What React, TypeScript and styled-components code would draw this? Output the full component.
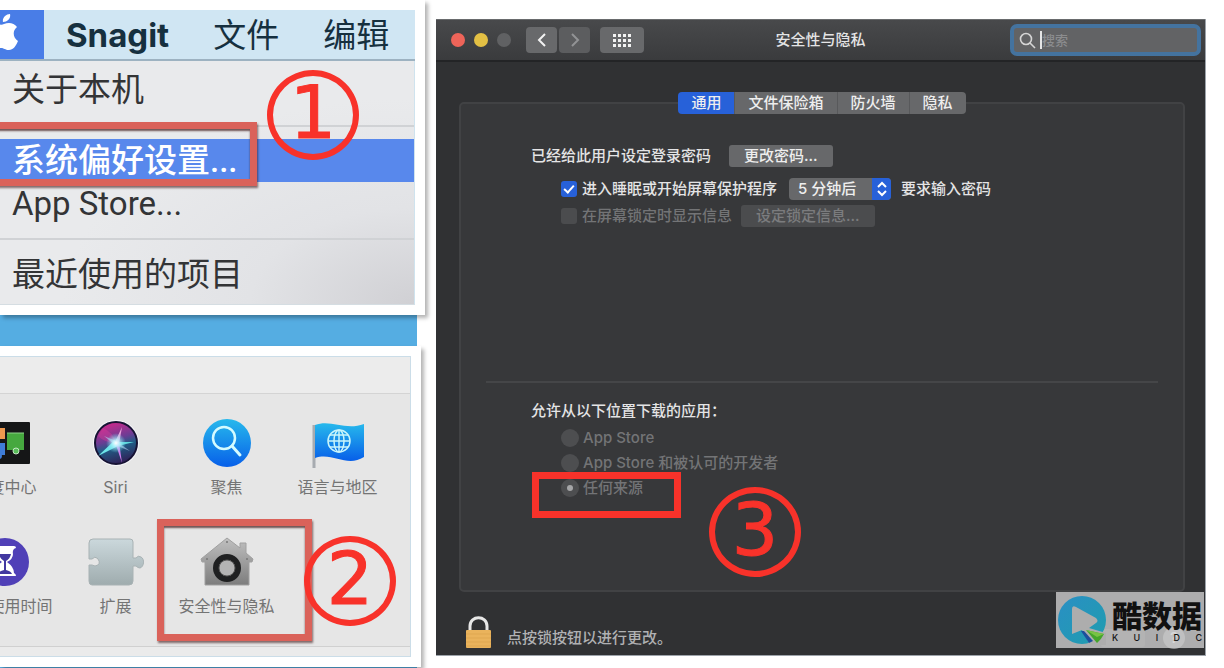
import React from "react";
import styled, { createGlobalStyle, css } from "styled-components";

const GlobalStyle = createGlobalStyle`
  *, *::before, *::after { box-sizing: border-box; }
  body {
    margin: 0;
    background: #fff;
    font-family: Inter, "Noto Sans CJK SC", sans-serif;
  }
  button, input, select { font: inherit; margin: 0; }
`;

const Page = styled.main`
  display: grid;
  grid-template-columns: 436px minmax(0, 1fr);
  align-items: start;
`;

const Steps = styled.div`
  display: flex;
  flex-direction: column;
  align-items: flex-start;
  overflow: hidden;
`;

const Card = styled.section<{ $width: number; $edge: number }>`
  position: relative;
  z-index: 1;
  width: ${(p) => p.$width}px;
  padding: 10px ${(p) => p.$edge}px 10px 0;
  background: #fff;
  box-shadow: 3px 3px 4px rgba(0, 0, 0, 0.3);
`;

const Strip = styled.div<{ $height: number }>`
  width: 417px;
  height: ${(p) => p.$height}px;
  background: #55ade2;
`;

/* Step 1: the Apple menu */

const MenuBar = styled.div`
  display: flex;
  align-items: center;
  gap: 44px;
  height: 51px;
  background: #d0e6f3;
  border-bottom: 2px solid #9db2c1;
  color: #16303f;
  font-size: 33px;
`;

const AppleBox = styled.div`
  width: 44px;
  height: 49px;
  margin-right: -22px;
  background: #497de7;
`;

const AppName = styled.strong`
  font-weight: 700;
`;

const MenuTitle = styled.span`
  padding-bottom: 4px;
`;

const MenuList = styled.ul`
  margin: 0;
  padding: 0 0 8px;
  list-style: none;
  color: #333436;
  font-family: Roboto, "Noto Sans CJK SC", sans-serif;
  font-size: 33px;
  background: radial-gradient(ellipse at 100% 100%, #d0d0d4 0, #e2e3e6 28%, #e9eaec 60%);
  border-right: 1px solid #cfe3ee;
  border-bottom: 1px solid #d5dde2;
`;

const MenuItem = styled.li<{ $active?: boolean; $tall?: boolean }>`
  height: ${(p) => (p.$tall ? 58 : 43)}px;
  padding-left: 12px;
  line-height: ${(p) => (p.$tall ? 58 : 43)}px;
  white-space: nowrap;
  ${(p) =>
    p.$active &&
    css`
      background: #5888ec;
      color: #fff;
      font-weight: 500;
    `}
`;

const MenuRule = styled.li<{ $above: number; $below: number }>`
  height: 2px;
  margin: ${(p) => p.$above}px 0 ${(p) => p.$below}px;
  background: #d0d2d5;
`;

/* Step 2: the preference grid */

const PrefPane = styled.div`
  border: 1px solid #cbdde8;
  border-left: 0;
  background: #e6e6e6;
`;

const PrefHeader = styled.div`
  height: 37px;
  background: #ececec;
  border-bottom: 1px solid #d4d4d4;
`;

const PrefGrid = styled.div`
  display: grid;
  grid-template-columns: repeat(4, 111px);
  justify-content: end;
  height: 252px;
  padding: 24px 17px 0 0;
  overflow: hidden;
`;

const PrefItem = styled.a`
  display: flex;
  flex-direction: column;
  align-items: center;
  gap: 7px;
  height: 119px;
  color: #747474;
  font-size: 16px;
  line-height: 24px;
  text-decoration: none;
  white-space: nowrap;
`;

const PrefFooter = styled.div`
  height: 10px;
  border-top: 1px solid #d0d0d0;
  background: #ebebeb;
`;

/* Annotations lying over the panels */

const Mark = styled.div<{ $x: number; $y: number }>`
  position: absolute;
  left: ${(p) => p.$x}px;
  top: ${(p) => p.$y}px;
`;

const RedBox = styled(Mark)<{ $w: number; $h: number; $soft?: boolean }>`
  width: ${(p) => p.$w}px;
  height: ${(p) => p.$h}px;
  border: 7px solid ${(p) => (p.$soft ? "#da625a" : "#f8322a")};
  pointer-events: none;
  ${(p) =>
    p.$soft &&
    css`
      box-shadow: 1px 2px 2px rgba(60, 20, 20, 0.6), inset 0 2px 2px rgba(60, 20, 20, 0.7);
    `}
`;

const StepNumber = styled(Mark)`
  display: flex;
  align-items: center;
  justify-content: center;
  width: 92px;
  height: 90px;
  padding-bottom: 4px;
  border: 6px solid #f8322a;
  border-radius: 50%;
  color: #f8322a;
  font-family: "DejaVu Sans", sans-serif;
  font-size: 73px;
  line-height: 74px;
  -webkit-text-stroke: 1px #f8322a;
`;

/* Step 3: the Security & Privacy window */

const Window = styled.section`
  position: relative;
  margin: 19px 18px 0 0;
  border-right: 1px solid #9da3aa;
  border-bottom: 1px solid #9da3aa;
  background: #303133;
  color: #e4e4e5;
  font-size: 15px;
  font-weight: 500;
  line-height: 22px;
`;

const TitleBar = styled.header`
  display: grid;
  grid-template-columns: 1fr auto 1fr;
  align-items: center;
  height: 43px;
  padding: 0 4px;
  background: linear-gradient(#48494b, #3a3b3d);
  border-top: 1px solid #696b6d;
  border-bottom: 2px solid #232426;
`;

const Controls = styled.div`
  display: flex;
  align-items: center;
  padding-left: 11px;
`;

const Light = styled.button<{ $color: string }>`
  width: 14px;
  height: 14px;
  margin-right: 9px;
  padding: 0;
  border: 0;
  border-radius: 50%;
  background: ${(p) => p.$color};
`;

const NavGroup = styled.div`
  display: flex;
  gap: 2px;
  margin: 0 10px 0 6px;
`;

const ToolButton = styled.button<{ $wide?: boolean }>`
  display: flex;
  align-items: center;
  justify-content: center;
  width: ${(p) => (p.$wide ? 44 : 31)}px;
  height: 26px;
  padding: 0;
  border: 0;
  border-radius: 4px;
  background: #68696b;
  color: #f2f2f2;
  &:disabled { background: #5c5d5f; color: #929395; }
`;

const Title = styled.h1`
  margin: 0;
  font-size: 15px;
  font-weight: 500;
  line-height: 22px;
`;

const SearchBox = styled.label`
  display: flex;
  align-items: center;
  justify-self: end;
  width: 191px;
  height: 32px;
  padding: 0 5px;
  border: 4px solid #44739f;
  border-radius: 7px;
  background: #626365;
  color: #d5d5d5;
`;

const Caret = styled.span`
  width: 2px;
  height: 18px;
  margin-left: 4px;
  background: #e5e5e5;
`;

const SearchInput = styled.input`
  flex: 1;
  min-width: 0;
  padding: 0;
  border: 0;
  outline: 0;
  background: transparent;
  color: #eee;
  font-size: 13px;
  &::placeholder { color: #8b8c8e; opacity: 1; }
`;

const WindowBody = styled.div`
  padding: 30px 20px 0 23px;
`;

const Tabs = styled.div`
  position: relative;
  display: flex;
  width: fit-content;
  margin: 0 auto -12px;
  border-radius: 4px;
  overflow: hidden;
`;

const Tab = styled.button<{ $selected?: boolean }>`
  height: 22px;
  padding: 0 13px;
  border: 0;
  border-right: 1px solid #58595b;
  background: ${(p) => (p.$selected ? "#2761d9" : "#67686a")};
  color: #eee;
  line-height: 22px;
  &:last-child { border-right: 0; }
`;

const Panel = styled.div`
  height: 490px;
  padding: 41px 25px 0;
  border: 2px solid #414244;
  border-radius: 5px;
  background: #37383a;
`;

const Group = styled.div<{ $height: number; $top?: number }>`
  height: ${(p) => p.$height}px;
  padding: ${(p) => p.$top ?? 0}px 0 0 45px;
`;

const Row = styled.div<{ $height: number; $indent?: boolean; $dim?: boolean }>`
  display: flex;
  align-items: center;
  height: ${(p) => p.$height}px;
  padding-left: ${(p) => (p.$indent ? 30 : 0)}px;
  color: ${(p) => (p.$dim ? "#737476" : "inherit")};
  white-space: nowrap;
`;

const Push = styled.button<{ $gap: number }>`
  height: 22px;
  margin-left: ${(p) => p.$gap}px;
  padding: 0 15px;
  border: 0;
  border-radius: 3px;
  background: #67686a;
  color: #eee;
  line-height: 22px;
  &:disabled { background: #4b4c4e; color: #7b7c7e; }
`;

const Choice = styled.label<{ $gap: number }>`
  display: flex;
  align-items: center;
  gap: ${(p) => p.$gap}px;
`;

const Check = styled.input`
  appearance: none;
  display: grid;
  place-items: center;
  width: 16px;
  height: 16px;
  border-radius: 3px;
  background: #4b4c4e;
  &:checked { background: #2761d9; }
  &:checked::after {
    content: "";
    width: 6px;
    height: 10px;
    margin-bottom: 3px;
    border: solid #fff;
    border-width: 0 2px 2px 0;
    transform: rotate(42deg);
  }
`;

const Radio = styled.input`
  appearance: none;
  display: grid;
  place-items: center;
  width: 18px;
  height: 18px;
  border-radius: 50%;
  background: #4d4e50;
  &:checked::after {
    content: "";
    width: 6px;
    height: 6px;
    border-radius: 50%;
    background: #a5a6a8;
  }
`;

const SelectBox = styled.span`
  display: grid;
  grid-template-columns: 1fr 19px;
  width: 102px;
  height: 22px;
  margin: 0 10px 0 12px;
  border-radius: 4px;
  overflow: hidden;
  background: #67686a;
`;

const Select = styled.select`
  grid-area: 1 / 1 / 2 / 3;
  appearance: none;
  padding: 0 0 0 9px;
  border: 0;
  background: transparent;
  color: #eee;
`;

const SelectArrows = styled.span`
  grid-area: 1 / 2 / 2 / 3;
  display: grid;
  place-items: center;
  background: #2761d9;
  pointer-events: none;
`;

const Rule = styled.hr`
  height: 2px;
  margin: 0;
  border: 0;
  background: #454648;
`;

const Footer = styled.footer`
  display: flex;
  align-items: flex-end;
  gap: 16px;
  height: 63px;
  padding: 0 0 6px 7px;
  color: #b0b1b3;
`;

const FooterActions = styled.div`
  display: flex;
  align-items: center;
  gap: 18px;
  margin-left: auto;
`;

const AdvancedButton = styled.button`
  width: 44px;
  height: 18px;
  padding: 0;
  border: 0;
  border-radius: 3px;
  background: #4b4c4e;
`;

const HelpButton = styled.button`
  width: 22px;
  height: 22px;
  padding: 0;
  border: 0;
  border-radius: 50%;
  background: #8c8d8f;
  color: #fff;
  line-height: 22px;
`;

const Watermark = styled.aside`
  position: absolute;
  right: 1px;
  bottom: 7px;
  display: flex;
  align-items: center;
  gap: 6px;
  width: 148px;
  height: 56px;
  padding: 0 2px;
  background: rgba(205, 205, 205, 0.8);
  color: #111;
`;

const Brand = styled.div`
  display: flex;
  flex-direction: column;
  flex: 1;
`;

const BrandName = styled.b`
  font-family: "Noto Sans CJK SC", sans-serif;
  font-size: 30px;
  font-weight: 900;
  line-height: 36px;
  white-space: nowrap;
`;

const BrandLatin = styled.span`
  display: flex;
  justify-content: space-between;
  font-size: 9px;
  font-weight: 500;
  line-height: 12px;
`;

const AppleLogo = () => (
  <svg width="44" height="49" viewBox="0 0 44 49" aria-hidden="true">
    <path
      fill="#fff"
      d="M3 12C2 8 6 4 10 4C11 8 8 12 3 12ZM-16 25C-16 16-8 12-2 14C1 15 2 15 4 14C9 12 14 13 17 17C12 21 13 28 18 31C16 36 13 40 9 40C5 40 4 38 1 38C-3 38-5 40-8 38C-13 34-16 30-16 25Z"
    />
  </svg>
);

const MissionIcon = () => (
  <svg width="54" height="50" viewBox="0 0 54 50" aria-hidden="true">
    <rect x="0" y="4" width="52" height="42" rx="1" fill="#151617" />
    <rect x="4" y="10" width="23" height="11" fill="#ee9a50" />
    <rect x="13" y="25" width="14" height="12" fill="#3f7dd8" />
    <circle cx="21" cy="38" r="3" fill="#3f7dd8" />
    <path d="M29 15H46V32H29Z" fill="#46a83f" />
    <path d="M29 15H46" stroke="#8ed38b" />
    <circle cx="38" cy="33" r="3" fill="#58bd59" stroke="#c4e5c4" />
  </svg>
);

const SiriIcon = () => (
  <svg width="50" height="50" viewBox="0 0 50 50" aria-hidden="true">
    <defs>
      <linearGradient id="siri" x1=".3" y1="0" x2=".6" y2="1">
        <stop offset="0" stopColor="#d3268b" />
        <stop offset=".42" stopColor="#6a3d94" />
        <stop offset=".6" stopColor="#205d86" />
        <stop offset="1" stopColor="#311d54" />
      </linearGradient>
      <radialGradient id="glow">
        <stop offset="0" stopColor="#fff" />
        <stop offset=".35" stopColor="#bdf6ff" stopOpacity=".8" />
        <stop offset="1" stopColor="#6edcf0" stopOpacity="0" />
      </radialGradient>
    </defs>
    <circle cx="25" cy="25" r="23" fill="#f7f7fa" />
    <circle cx="25" cy="25" r="21" fill="url(#siri)" stroke="#171334" strokeWidth="2" />
    <path d="M12 10Q22 14 25 25Q14 25 7 18Z" fill="#dd3b9c" opacity=".4" />
    <path d="M24 22L7 38L27 28Z" fill="#6de5e9" />
    <path d="M24 24L43 24L27 28Z" fill="#5ed8dc" />
    <path d="M24 24L31 45L28 24Z" fill="#cf7ced" />
    <path d="M24 24L31 9L28 26Z" fill="#e8a3dc" />
    <path d="M13 18L25 23L39 33L24 27Z" fill="#b6d6f4" opacity=".6" />
    <circle cx="25" cy="25" r="10" fill="url(#glow)" />
  </svg>
);

const SpotlightIcon = () => (
  <svg width="50" height="50" viewBox="0 0 50 50" aria-hidden="true">
    <defs>
      <linearGradient id="blue" x1="0" y1="0" x2="0" y2="1">
        <stop offset="0" stopColor="#27b9ec" />
        <stop offset="1" stopColor="#075fe9" />
      </linearGradient>
    </defs>
    <circle cx="25" cy="25" r="24" fill="url(#blue)" />
    <circle cx="22" cy="20" r="11" fill="none" stroke="#d4fbff" strokeWidth="2.5" />
    <path d="M30 28L38 37" stroke="#d4fbff" strokeWidth="3" strokeLinecap="round" />
  </svg>
);

const FlagIcon = () => (
  <svg width="54" height="50" viewBox="0 0 54 50" aria-hidden="true">
    <path d="M3 7V50" stroke="#a7abb0" strokeWidth="3" />
    <path d="M4 7C20 1 34 13 53 6V39C36 50 22 34 4 40Z" fill="url(#blue)" />
    <g fill="none" stroke="#c9f5fb" strokeWidth="1.5">
      <circle cx="28" cy="23" r="11" />
      <ellipse cx="28" cy="23" rx="5" ry="11" />
      <path d="M28 12V34M17 23H39M19 17H37M19 29H37" />
    </g>
  </svg>
);

const ScreenTimeIcon = () => (
  <svg width="50" height="50" viewBox="0 0 50 50" aria-hidden="true">
    <circle cx="25" cy="25" r="24" fill="#5040b7" />
    <path
      d="M15 9H34Q36 9 36 11Q32 12 33 17Q33 22 27 25Q34 30 34 36Q36 37 36 39H14Q14 37 16 36Q16 29 22 25Q16 21 17 15Q17 12 14 11Q14 9 15 9Z"
      fill="#fff"
    />
    <path d="M19 17H31Q30 22 26 24V33Q31 34 32 37H18Q19 34 24 33V24Q20 22 19 17Z" fill="#4238a0" />
  </svg>
);

const PuzzleIcon = () => (
  <svg width="56" height="50" viewBox="0 0 56 50" aria-hidden="true">
    <defs>
      <linearGradient id="puzzle" x1="0" y1="0" x2="0" y2="1">
        <stop offset="0" stopColor="#cbd8dc" />
        <stop offset="1" stopColor="#9facae" />
      </linearGradient>
    </defs>
    <path
      d="M5 2H42Q45 2 45 5V21H48Q50 18 53 20C57 22 56 30 52 31Q50 31 48 29H45V44Q45 48 41 48H4Q1 48 1 44V28H4Q7 30 10 28Q13 25 9 21Q7 19 4 22H1V6Q1 2 5 2Z"
      fill="url(#puzzle)"
      stroke="#a8b2b4"
      strokeWidth="1"
    />
  </svg>
);

const HouseIcon = () => (
  <svg width="54" height="50" viewBox="0 0 54 50" aria-hidden="true">
    <defs>
      <linearGradient id="steel" x1="0" y1="0" x2="0" y2="1">
        <stop offset="0" stopColor="#c0c0c0" />
        <stop offset="1" stopColor="#7d7d7d" />
      </linearGradient>
    </defs>
    <path
      d="M27 1L40 11V6H46V16L53 22L52 25H49V48H5V25H2L1 22Z"
      fill="url(#steel)"
      stroke="#a0a0a0"
      strokeWidth="1"
    />
    <circle cx="27" cy="31" r="11" fill="#aaa" stroke="#1f2021" strokeWidth="6" />
    <circle cx="27" cy="31" r="8" fill="#b4b4b4" stroke="#555" strokeWidth="1" />
    <circle cx="27" cy="5" r="1" fill="#777" />
    <circle cx="7" cy="22" r="1" fill="#777" />
    <circle cx="47" cy="22" r="1" fill="#777" />
  </svg>
);

const LockIcon = () => (
  <svg width="25" height="33" viewBox="0 0 25 33" aria-hidden="true">
    <path d="M4 15V10C4-1 21-1 21 10V15" fill="none" stroke="#e7e7e7" strokeWidth="3" />
    <rect x="0" y="14" width="25" height="18" rx="1" fill="#eab35c" />
    <path d="M0 18H25M0 22H25M0 26H25M0 30H25" stroke="#dfa751" strokeWidth="1" />
  </svg>
);

const KuidcLogo = () => (
  <svg width="48" height="50" viewBox="0 0 48 50" aria-hidden="true">
    <defs>
      <linearGradient id="brand" x1="0" y1="0" x2="1" y2="1">
        <stop offset="0" stopColor="#2a8fc4" />
        <stop offset="1" stopColor="#1f9dae" />
      </linearGradient>
    </defs>
    <circle cx="24" cy="25" r="24" fill="url(#brand)" />
    <path d="M14 14Q14 10 18 12L38 23Q41 26 38 28L31 33L48 38V50H32L24 35L14 39Z" fill="#adadad" />
    <path d="M23 36L26 36L35 46L31 48Z" fill="#1b4f9d" />
    <path d="M28 35L46 39Q43 45 39 48Z" fill="#45a52b" />
    <path d="M28 35L46 39L39 42Z" fill="#79c344" />
  </svg>
);

const prefs: { label: string; icon: React.ReactNode }[] = [
  { label: "调度中心", icon: <MissionIcon /> },
  { label: "Siri", icon: <SiriIcon /> },
  { label: "聚焦", icon: <SpotlightIcon /> },
  { label: "语言与地区", icon: <FlagIcon /> },
  { label: "屏幕使用时间", icon: <ScreenTimeIcon /> },
  { label: "扩展", icon: <PuzzleIcon /> },
  { label: "安全性与隐私", icon: <HouseIcon /> },
];

const tabs = ["通用", "文件保险箱", "防火墙", "隐私"];
const sources = ["App Store", "App Store 和被认可的开发者", "任何来源"];
const gridDots = [0, 5, 10, 15];

export default function App() {
  return (
    <>
      <GlobalStyle />
      <Page>
        <Steps>
          <Card $width={425} $edge={10}>
            <MenuBar>
              <AppleBox>
                <AppleLogo />
              </AppleBox>
              <AppName>Snagit</AppName>
              <MenuTitle>文件</MenuTitle>
              <MenuTitle>编辑</MenuTitle>
            </MenuBar>
            <MenuList>
              <MenuItem $tall>关于本机</MenuItem>
              <MenuRule $above={6} $below={12} />
              <MenuItem $active>系统偏好设置...</MenuItem>
              <MenuItem>App Store...</MenuItem>
              <MenuRule $above={13} $below={13} />
              <MenuItem>最近使用的项目</MenuItem>
            </MenuList>
            <RedBox $x={-10} $y={122} $w={267} $h={64} $soft />
            <StepNumber $x={267} $y={70}>1</StepNumber>
          </Card>
          <Strip $height={31} />
          <Card $width={421} $edge={10}>
            <PrefPane>
              <PrefHeader />
              <PrefGrid>
                {prefs.map((p) => (
                  <PrefItem key={p.label} href="#">
                    {p.icon}
                    <span>{p.label}</span>
                  </PrefItem>
                ))}
              </PrefGrid>
              <PrefFooter />
            </PrefPane>
            <RedBox $x={157} $y={173} $w={155} $h={122} $soft />
            <StepNumber $x={304} $y={190}>2</StepNumber>
          </Card>
          <Strip $height={1} />
        </Steps>

        <Window>
          <TitleBar>
            <Controls>
              <Light $color="#ee6459" aria-label="关闭" />
              <Light $color="#e3c044" aria-label="最小化" />
              <Light $color="#606163" aria-label="缩放" disabled />
              <NavGroup>
                <ToolButton aria-label="后退">
                  <svg width="12" height="16" viewBox="0 0 12 16" fill="none" stroke="currentColor" strokeWidth="2">
                    <path d="M9 2L3 8L9 14" />
                  </svg>
                </ToolButton>
                <ToolButton aria-label="前进" disabled>
                  <svg width="12" height="16" viewBox="0 0 12 16" fill="none" stroke="currentColor" strokeWidth="2">
                    <path d="M3 2L9 8L3 14" />
                  </svg>
                </ToolButton>
              </NavGroup>
              <ToolButton aria-label="显示全部" $wide>
                <svg width="18" height="13" viewBox="0 0 18 13" fill="currentColor">
                  {gridDots.map((x) =>
                    gridDots.slice(0, 3).map((y) => <rect key={`${x}-${y}`} x={x} y={y} width="3" height="3" />)
                  )}
                </svg>
              </ToolButton>
            </Controls>
            <Title>安全性与隐私</Title>
            <SearchBox>
              <svg width="17" height="17" viewBox="0 0 17 17" fill="none" stroke="currentColor" strokeWidth="1.6" aria-hidden="true">
                <circle cx="7" cy="7" r="5.5" />
                <path d="M11 11L16 16" />
              </svg>
              <Caret />
              <SearchInput type="search" placeholder="搜索" aria-label="搜索" />
            </SearchBox>
          </TitleBar>

          <WindowBody>
            <Tabs role="tablist">
              {tabs.map((t, i) => (
                <Tab key={t} role="tab" $selected={i === 0} aria-selected={i === 0}>
                  {t}
                </Tab>
              ))}
            </Tabs>
            <Panel>
              <Group $height={236}>
                <Row $height={22}>
                  已经给此用户设定登录密码
                  <Push $gap={18}>更改密码...</Push>
                </Row>
                <Row $height={44} $indent>
                  <Choice $gap={5}>
                    <Check type="checkbox" defaultChecked />
                    进入睡眠或开始屏幕保护程序
                  </Choice>
                  <SelectBox>
                    <Select aria-label="要求输入密码的时间" defaultValue="5">
                      <option value="5">5 分钟后</option>
                    </Select>
                    <SelectArrows>
                      <svg width="12" height="16" viewBox="0 0 12 16" fill="none" stroke="#fff" strokeWidth="2">
                        <path d="M2 6L6 2L10 6M2 10L6 14L10 10" />
                      </svg>
                    </SelectArrows>
                  </SelectBox>
                  要求输入密码
                </Row>
                <Row $height={10} $indent $dim>
                  <Choice $gap={5}>
                    <Check type="checkbox" disabled />
                    在屏幕锁定时显示信息
                  </Choice>
                  <Push $gap={9} disabled>
                    设定锁定信息...
                  </Push>
                </Row>
              </Group>
              <Rule />
              <Group $height={180} $top={14}>
                <Row $height={28}>允许从以下位置下载的应用：</Row>
                {sources.map((s, i) => (
                  <Row key={s} $height={25} $indent $dim>
                    <Choice $gap={4}>
                      <Radio type="radio" name="source" defaultChecked={i === 2} disabled />
                      {s}
                    </Choice>
                  </Row>
                ))}
              </Group>
            </Panel>
            <Footer>
              <LockIcon />
              <span>点按锁按钮以进行更改。</span>
              <FooterActions>
                <AdvancedButton aria-label="高级" disabled />
                <HelpButton aria-label="帮助">?</HelpButton>
              </FooterActions>
            </Footer>
          </WindowBody>

          <RedBox $x={96} $y={453} $w={149} $h={46} />
          <StepNumber $x={273} $y={468}>3</StepNumber>
          <Watermark>
            <KuidcLogo />
            <Brand>
              <BrandName>酷数据</BrandName>
              <BrandLatin>
                <span>K</span>
                <span>U</span>
                <span>I</span>
                <span>D</span>
                <span>C</span>
              </BrandLatin>
            </Brand>
          </Watermark>
        </Window>
      </Page>
    </>
  );
}
